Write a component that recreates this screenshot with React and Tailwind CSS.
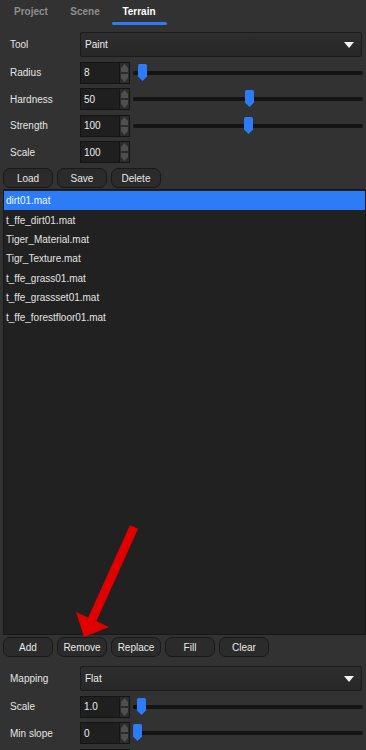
import React from 'react';

const font = { fontFamily: '"Liberation Sans", Arial, sans-serif' };

const materials = [
  'dirt01.mat',
  't_ffe_dirt01.mat',
  'Tiger_Material.mat',
  'Tigr_Texture.mat',
  't_ffe_grass01.mat',
  't_ffe_grassset01.mat',
  't_ffe_forestfloor01.mat',
];

const Caret = () => (
  <svg width="10" height="6" viewBox="0 0 10 6" className="mr-[7px]">
    <polygon points="0,0 10,0 5,6" fill="#f2f2f2" />
  </svg>
);

const Dropdown = ({ label, value }) => (
  <div className="flex items-center h-[25px] pl-[10px]">
    <div className="w-[70px] text-[10px] text-[#e4e4e4]">{label}</div>
    <div className="flex-1 mr-[4px] h-[25px] flex items-center justify-between bg-gradient-to-b from-[#2e2e2e] to-[#272727] border border-[#1b1b1b] rounded-[2px]">
      <span className="pl-[4px] text-[10px] text-[#ececec]">{value}</span>
      <Caret />
    </div>
  </div>
);

const Thumb = ({ left }) => (
  <svg width="9" height="17" viewBox="0 0 9 17" className="absolute top-[2px]" style={{ left }}>
    <path d="M0 1.5 Q0 0 1.5 0 H7.5 Q9 0 9 1.5 V12.5 L4.5 17 L0 12.5 Z" fill="#2b7cf6" />
  </svg>
);

const SpinRow = ({ label, value, pos, dot, noSlider }) => (
  <div className="flex items-center h-[22px] pl-[10px]">
    <div className="w-[70px] text-[10px] text-[#e4e4e4]">{label}</div>
    <div className="w-[50px] h-[22px] flex border border-[#141414] bg-[#1f1f1f]">
      <div className="flex-1 flex items-center pl-[3px] text-[10px] text-[#ececec]">{value}</div>
      <div className="w-[10px] flex flex-col bg-[#2c2c2c] border-l border-[#141414]">
        <svg width="9" height="10" viewBox="0 0 9 10" className="flex-1">
          <polygon points="1,9 1,5 4.5,1 8,5 8,9" fill="#4f4f4f" />
        </svg>
        <svg width="9" height="10" viewBox="0 0 9 10" className="flex-1">
          <polygon points="1,1 1,5 4.5,9 8,5 8,1" fill="#4f4f4f" />
        </svg>
      </div>
    </div>
    {!noSlider && (
      <div className="relative flex-1 h-[22px] ml-[3px] mr-[3px] flex items-center">
        <div className="w-full h-[4px] rounded-full bg-[#141414]" />
        {dot && <div className="absolute left-[0px] top-[9px] w-[4px] h-[4px] rounded-full bg-[#0c0c0c]" />}
        <Thumb left={pos} />
      </div>
    )}
  </div>
);

const Btn = ({ children }) => (
  <button className="w-[50px] h-[20px] rounded-[7px] bg-[#2b2b2b] border border-[#191919] text-[10px] text-[#e8e8e8] flex items-center justify-center">
    {children}
  </button>
);

export default function App() {
  return (
    <div className="relative w-[366px] h-[750px] overflow-hidden bg-[#323232]" style={font}>
      {/* tabs */}
      <div className="flex h-[26px] pl-[4px]">
        {['Project', 'Scene', 'Terrain'].map((t, i) => (
          <div key={t} className="relative w-[54px] flex items-center justify-center text-[10px] font-bold">
            <span className={i === 2 ? 'text-white pb-[3px]' : 'text-[#8e8e8e] pb-[3px]'}>{t}</span>
            {i === 2 && <div className="absolute left-0 right-[-1px] bottom-[1px] h-[3px] rounded-full bg-[#2b7cf6]" />}
          </div>
        ))}
      </div>

      <div className="flex flex-col gap-[4.5px] mt-[6px]">
        <Dropdown label="Tool" value="Paint" />
        <SpinRow label="Radius" value="8" pos={5} />
        <SpinRow label="Hardness" value="50" pos={112} />
        <SpinRow label="Strength" value="100" pos={111} />
        <SpinRow label="Scale" value="100" noSlider />
      </div>

      <div className="flex gap-[4px] pl-[3px] mt-[5px]">
        <Btn>Load</Btn>
        <Btn>Save</Btn>
        <Btn>Delete</Btn>
      </div>

      {/* material list */}
      <div className="ml-[3px] mt-[1px] h-[446px] bg-[#212121] border border-[#181818] pt-[1px]">
        {materials.map((m, i) => (
          <div
            key={m}
            className={`h-[19.4px] flex items-center pl-[2px] text-[10px] ${i === 0 ? 'bg-[#2b7cf6] text-[#f4f8ff]' : 'text-[#e2e2e2]'}`}
          >
            {m}
          </div>
        ))}
      </div>

      <div className="flex gap-[4px] pl-[3px] mt-[2px]">
        <Btn>Add</Btn>
        <Btn>Remove</Btn>
        <Btn>Replace</Btn>
        <Btn>Fill</Btn>
        <Btn>Clear</Btn>
      </div>

      <div className="flex flex-col gap-[4.5px] mt-[9px]">
        <Dropdown label="Mapping" value="Flat" />
        <SpinRow label="Scale" value="1.0" pos={4} dot />
        <SpinRow label="Min slope" value="0" pos={0} />
        <SpinRow label="" value="" pos={220} />
      </div>

      {/* annotation arrow */}
      <svg className="absolute left-0 top-0 pointer-events-none" width="366" height="750">
        <line x1="134" y1="527" x2="92" y2="620" stroke="#e10000" strokeWidth="9" />
        <polygon points="76,612 109,627 84,637" fill="#e10000" />
      </svg>
    </div>
  );
}
